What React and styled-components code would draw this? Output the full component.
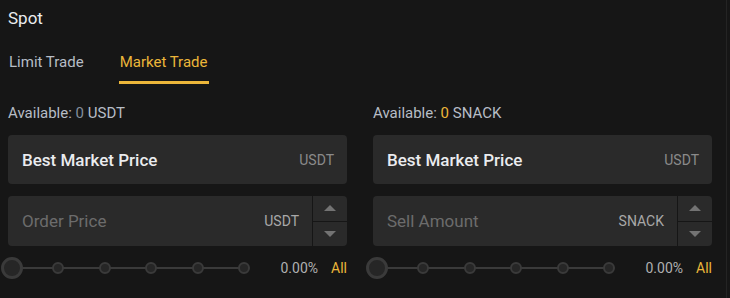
import React, { useState } from 'react'
import { styled, createGlobalStyle } from 'styled-components'

const GlobalStyle = createGlobalStyle`
  body {
    margin: 0;
    background: #161616;
    font-family: Roboto, "Noto Sans", sans-serif;
  }
`;

const Panel = styled.div`
  width: 727px;
  height: 298px;
  box-sizing: border-box;
  padding: 0 8px;
  border-right: 1px solid #242424;
  background: #161616;
`;

const Title = styled.div`
  padding-top: 8px;
  font-size: 17px;
  line-height: 20px;
  color: #eaecef;
`;

const Tabs = styled.div`
  display: flex;
  gap: 34px;
  margin-top: 16px;
`;

const Tab = styled.div`
  height: 40px;
  padding: 8px 1px 0;
  box-sizing: border-box;
  font-size: 15px;
  line-height: 20px;
  color: ${p => (p.$active ? '#ecb63a' : '#b7bdc6')};
  border-bottom: 3px solid ${p => (p.$active ? '#ecb63a' : 'transparent')};
  cursor: pointer;
`;

const Columns = styled.div`
  display: grid;
  grid-template-columns: 339px 339px;
  gap: 26px;
`;

const Column = styled.div`
  display: flex;
  flex-direction: column;
`;

const Available = styled.div`
  margin-top: 19px;
  font-size: 15px;
  line-height: 20px;
  color: #b7bdc6;
`;

const Amount = styled.span`
  color: ${p => (p.$highlight ? '#ecb63a' : '#848e9c')};
`;

const Field = styled.div`
  display: flex;
  height: ${p => p.$h}px;
  margin-top: ${p => p.$mt}px;
  border-radius: 4px;
  overflow: hidden;
  gap: 1px;
`;

const FieldBody = styled.div`
  flex: 1;
  display: flex;
  align-items: center;
  justify-content: space-between;
  padding: 0 13px 0 14px;
  background: #2a2a2a;
`;

const FieldLabel = styled.span`
  font-size: 17px;
  font-weight: ${p => (p.$strong ? 500 : 400)};
  color: ${p => (p.$strong ? '#eaecef' : '#6c6c6c')};
`;

const Unit = styled.span`
  font-size: 14px;
  color: ${p => (p.$muted ? '#8a8a8a' : '#a8a8a8')};
`;

const Stepper = styled.div`
  width: 34px;
  display: flex;
  flex-direction: column;
  gap: 1px;
`;

const StepButton = styled.div`
  flex: 1;
  display: flex;
  align-items: center;
  justify-content: center;
  background: #2a2a2a;
`;

const Arrow = styled.div`
  width: 0;
  height: 0;
  border-left: 6px solid transparent;
  border-right: 6px solid transparent;
  ${p =>
    p.$up
      ? 'border-bottom: 6px solid #737373;'
      : 'border-top: 6px solid #737373;'}
`;

const SliderRow = styled.div`
  display: flex;
  align-items: center;
  height: 24px;
  margin-top: 10px;
`;

const Track = styled.div`
  position: relative;
  width: 232px;
  height: 2px;
  margin-left: 4px;
  background: #3a3a3a;
`;

const Knob = styled.div`
  position: absolute;
  top: 50%;
  transform: translate(-50%, -50%);
  box-sizing: border-box;
  width: ${p => (p.$big ? 22 : 12)}px;
  height: ${p => (p.$big ? 22 : 12)}px;
  border-radius: 50%;
  border: ${p => (p.$big ? 3 : 2)}px solid #3a3a3a;
  background: #262626;
`;

const Percent = styled.span`
  margin-left: auto;
  font-size: 14px;
  color: #b0b0b0;
`;

const All = styled.span`
  margin-left: 13px;
  font-size: 14px;
  color: #ecb63a;
  cursor: pointer;
`;

const marks = [0, 20, 40, 60, 80, 100];

const Side = ({ available, highlight, unitLabel, placeholder, unit }) => (
  <Column>
    <Available>
      Available: <Amount $highlight={highlight}>0</Amount> {available}
    </Available>
    <Field $h={49} $mt={12}>
      <FieldBody>
        <FieldLabel $strong>Best Market Price</FieldLabel>
        <Unit $muted>{unitLabel}</Unit>
      </FieldBody>
    </Field>
    <Field $h={50} $mt={12}>
      <FieldBody>
        <FieldLabel>{placeholder}</FieldLabel>
        <Unit>{unit}</Unit>
      </FieldBody>
      <Stepper>
        <StepButton><Arrow $up /></StepButton>
        <StepButton><Arrow /></StepButton>
      </Stepper>
    </Field>
    <SliderRow>
      <Track>
        {marks.map(m => (
          <Knob key={m} $big={m === 0} style={{ left: `${m}%` }} />
        ))}
      </Track>
      <Percent>0.00%</Percent>
      <All>All</All>
    </SliderRow>
  </Column>
);

const App = () => {
  const [tab, setTab] = useState('market');
  return (
    <Panel>
      <GlobalStyle />
      <Title>Spot</Title>
      <Tabs>
        <Tab $active={tab === 'limit'} onClick={() => setTab('limit')}>Limit Trade</Tab>
        <Tab $active={tab === 'market'} onClick={() => setTab('market')}>Market Trade</Tab>
      </Tabs>
      <Columns>
        <Side available="USDT" unitLabel="USDT" placeholder="Order Price" unit="USDT" />
        <Side available="SNACK" highlight unitLabel="USDT" placeholder="Sell Amount" unit="SNACK" />
      </Columns>
    </Panel>
  );
};

export default App;
